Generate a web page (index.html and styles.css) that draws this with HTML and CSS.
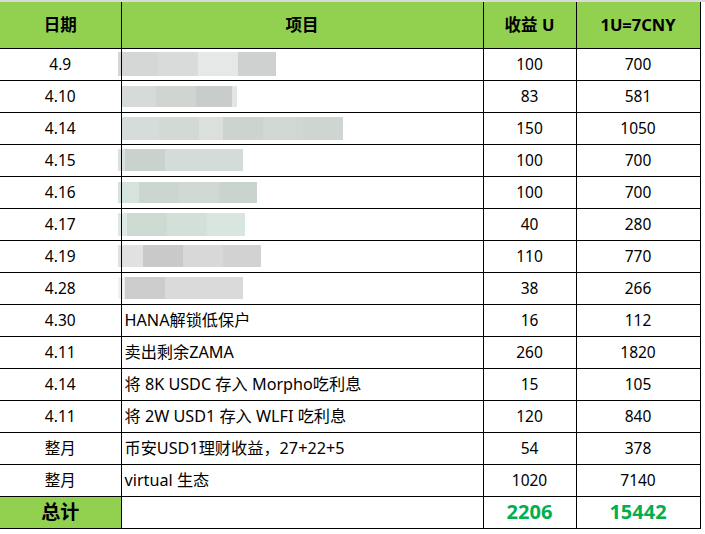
FILE: index.html
```html
<!DOCTYPE html>
<html lang="zh">
<head>
<meta charset="utf-8">
<title>收益表</title>
<link rel="stylesheet" href="styles.css">
</head>
<body>
<div class="topbar"></div>
<table class="sheet">
  <colgroup>
    <col class="c-date">
    <col class="c-item">
    <col class="c-u">
    <col class="c-cny">
  </colgroup>
  <thead>
    <tr class="head">
      <th>日期</th>
      <th>项目</th>
      <th>收益 U</th>
      <th>1U=7CNY</th>
    </tr>
  </thead>
  <tbody>
    <tr>
      <td>4.9</td>
      <td class="item"><span class="blur out h24"><i style="width:40px;background:#d5d6d6"></i><i style="width:40px;background:#d9dbdb"></i><i style="width:40px;background:#e6e7e7"></i><i style="width:38px;background:#cfd1d1"></i></span></td>
      <td>100</td><td>700</td>
    </tr>
    <tr>
      <td>4.10</td>
      <td class="item"><span class="blur edge h21"><i style="width:35px;background:#d6dad8"></i><i style="width:40px;background:#d0d5d2"></i><i style="width:36px;background:#c8cdcb"></i><i style="width:5px;background:#e3e6e4"></i></span></td>
      <td>83</td><td>581</td>
    </tr>
    <tr>
      <td>4.14</td>
      <td class="item"><span class="blur edge h23"><i style="width:38px;background:#d6dcd9"></i><i style="width:40px;background:#d3dad6"></i><i style="width:24px;background:#dbe0dd"></i><i style="width:40px;background:#cdd4d0"></i><i style="width:40px;background:#d1d8d4"></i><i style="width:40px;background:#cfd6d2"></i></span></td>
      <td>150</td><td>1050</td>
    </tr>
    <tr>
      <td>4.15</td>
      <td class="item"><span class="blur out h22"><i style="width:7px;background:#dbe1de"></i><i style="width:40px;background:#cad2ce"></i><i style="width:78px;background:#d3dcd8"></i></span></td>
      <td>100</td><td>700</td>
    </tr>
    <tr>
      <td>4.16</td>
      <td class="item"><span class="blur out h21"><i style="width:21px;background:#d6e2dc"></i><i style="width:40px;background:#cbd6d0"></i><i style="width:40px;background:#cfd8d3"></i><i style="width:38px;background:#cad4ce"></i></span></td>
      <td>100</td><td>700</td>
    </tr>
    <tr>
      <td>4.17</td>
      <td class="item"><span class="blur out h23"><i style="width:9px;background:#dfe9e3"></i><i style="width:40px;background:#ccdad2"></i><i style="width:40px;background:#d3e0d9"></i><i style="width:38px;background:#d9e5df"></i></span></td>
      <td>40</td><td>280</td>
    </tr>
    <tr>
      <td>4.19</td>
      <td class="item"><span class="blur out h22"><i style="width:25px;background:#e1e1e1"></i><i style="width:40px;background:#c9c9c9"></i><i style="width:40px;background:#d8d8d8"></i><i style="width:38px;background:#d2d2d2"></i></span></td>
      <td>110</td><td>770</td>
    </tr>
    <tr>
      <td>4.28</td>
      <td class="item"><span class="blur out h22"><i style="width:7px;background:#f0f0f0"></i><i style="width:40px;background:#cccccc"></i><i style="width:78px;background:#dadada"></i></span></td>
      <td>38</td><td>266</td>
    </tr>
    <tr>
      <td>4.30</td>
      <td class="item">HANA解锁低保户</td>
      <td>16</td><td>112</td>
    </tr>
    <tr>
      <td>4.11</td>
      <td class="item">卖出剩余ZAMA</td>
      <td>260</td><td>1820</td>
    </tr>
    <tr>
      <td>4.14</td>
      <td class="item">将 8K USDC 存入 Morpho吃利息</td>
      <td>15</td><td>105</td>
    </tr>
    <tr>
      <td>4.11</td>
      <td class="item">将 2W USD1 存入 WLFI 吃利息</td>
      <td>120</td><td>840</td>
    </tr>
    <tr>
      <td>整月</td>
      <td class="item">币安USD1理财收益，27+22+5</td>
      <td>54</td><td>378</td>
    </tr>
    <tr>
      <td>整月</td>
      <td class="item">virtual 生态</td>
      <td>1020</td><td>7140</td>
    </tr>
  </tbody>
  <tfoot>
    <tr class="total">
      <td class="total-label">总计</td>
      <td class="item"></td>
      <td class="sum">2206</td>
      <td class="sum">15442</td>
    </tr>
  </tfoot>
</table>
</body>
</html>
```

FILE: styles.css
```css
html {
  margin: 0;
  padding: 0;
  background: #ffffff;
}

body {
  margin: 0;
  padding: 0;
  font-family: "Noto Sans", "Noto Sans CJK SC", sans-serif;
  color: #000000;
}

.topbar {
  height: 2px;
  background: #dadada;
}

.sheet {
  border-collapse: collapse;
  table-layout: fixed;
  width: 700px;
}

.c-date { width: 121px; }
.c-item { width: 362px; }
.c-u { width: 93px; }
.c-cny { width: 124px; }

.sheet th,
.sheet td {
  border: 1px solid #000000;
  padding: 0 3px;
  text-align: center;
  vertical-align: middle;
  white-space: nowrap;
  overflow: visible;
}

.sheet th:first-child,
.sheet td:first-child {
  border-left: none;
}

.sheet tbody tr,
.sheet tfoot tr {
  height: 32px;
}

.sheet td {
  font-size: 15.5px;
  font-weight: 400;
  line-height: 20px;
}

.head {
  height: 46px;
}

.head th {
  border-top: none;
  background: #92d050;
  font-size: 16.5px;
  font-weight: 700;
  line-height: 22px;
}

.sheet td.item {
  text-align: left;
  font-size: 16.2px;
}

.blur {
  display: flex;
  width: max-content;
  position: relative;
  z-index: -1;
}

.blur i {
  display: block;
  height: 100%;
}

.blur.out { margin-left: -7px; }
.blur.edge { margin-left: -4px; }

.h21 { height: 21px; }
.h22 { height: 22px; }
.h23 { height: 23px; }
.h24 { height: 24px; }

.total-label {
  background: #92d050;
}

.sheet td.total-label {
  font-size: 19px;
  font-weight: 700;
}

.sheet td.sum {
  color: #00b050;
  font-size: 20px;
  font-weight: 700;
}
```
